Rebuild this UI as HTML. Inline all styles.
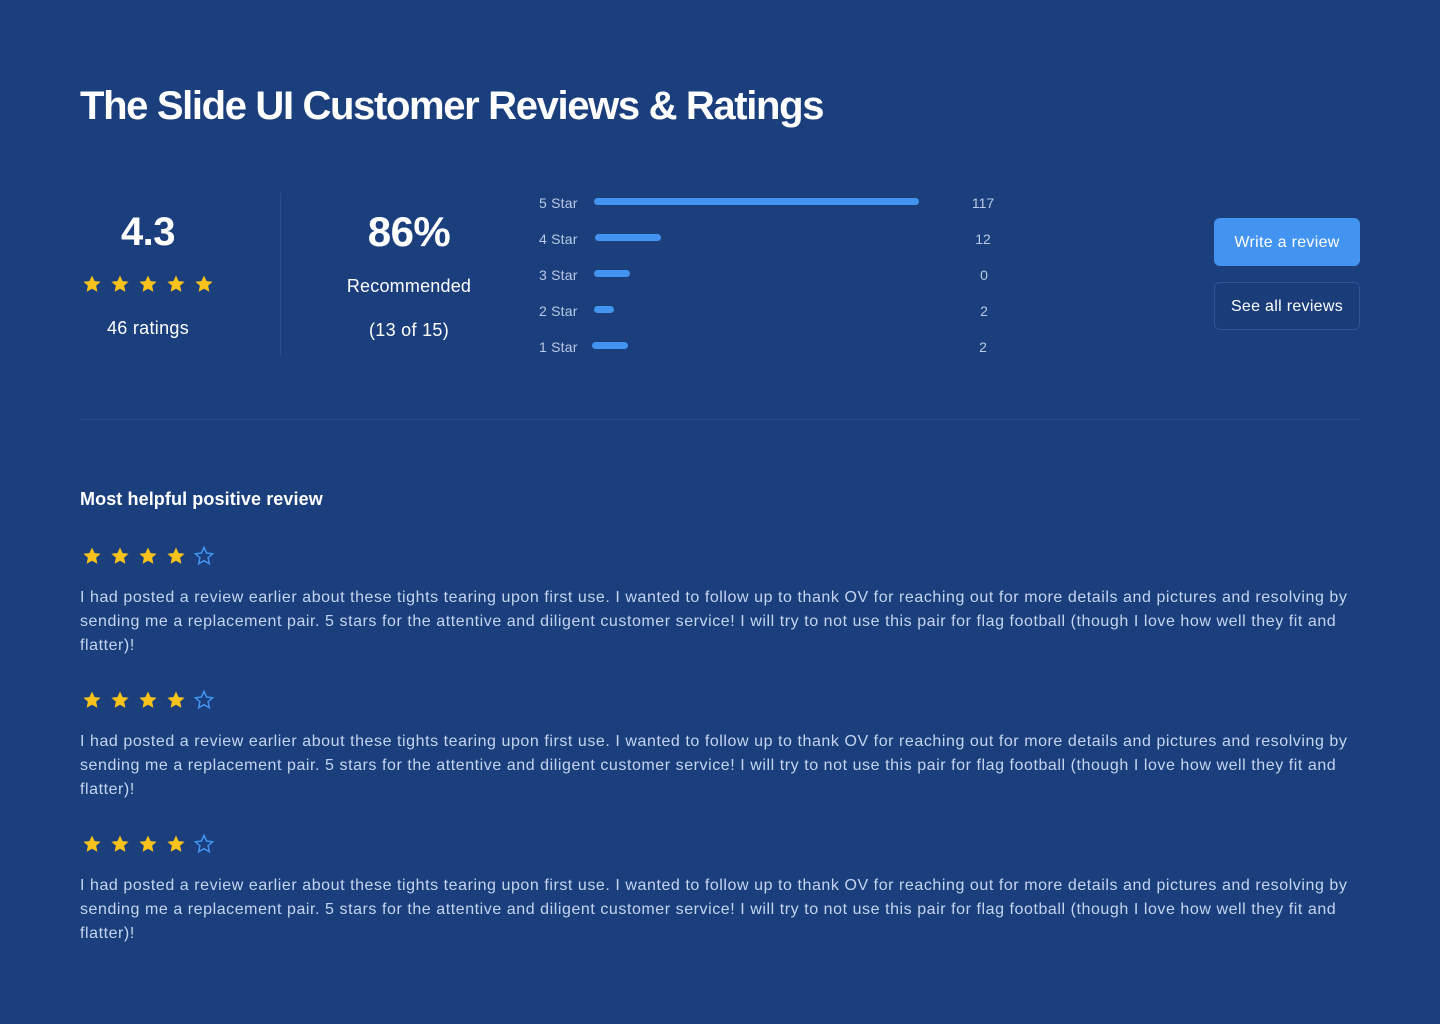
<!DOCTYPE html>
<html><head><meta charset="utf-8"><style>
*{margin:0;padding:0;box-sizing:border-box}
body{width:1440px;height:1024px;background:#1b3f7c;font-family:"Liberation Sans",sans-serif;color:#fff;position:relative;overflow:hidden}
.a{position:absolute}
h1{position:absolute;left:80px;top:84px;font-size:40px;font-weight:700;letter-spacing:-1.35px;white-space:nowrap}
.c{text-align:center}
.stars svg{margin-right:8px;vertical-align:top}
.lbl{font-size:14px;color:#b9c9e6;width:60px;letter-spacing:0.2px}
.bar{height:7px;border-radius:4px;background:#4394f0}
.num{font-size:14px;color:#b9c9e6;width:40px;text-align:center}
.btn{position:absolute;left:1214px;width:146px;height:48px;border-radius:6px;font-size:16px;display:flex;align-items:center;justify-content:center;letter-spacing:0.3px;padding-top:2px}
.rev{position:absolute;left:80px;font-size:16px;line-height:24px;color:#c5d4ef;white-space:nowrap;letter-spacing:0.56px}
</style></head><body>
<svg width="0" height="0" style="position:absolute"><defs>
<path id="s" d="M10 1.5l2.6 5.6 6 .6-4.5 4.1 1.3 6-5.4-3.1-5.4 3.1 1.3-6L1.4 7.7l6-.6z"/>
</defs></svg>
<h1>The Slide UI Customer Reviews &amp; Ratings</h1>

<div class="a c" style="left:80px;top:210px;width:136px;font-size:40px;font-weight:700;letter-spacing:-0.5px">4.3</div>
<div class="a stars" style="left:82px;top:274px;white-space:nowrap">
<svg width="20" height="20"><use href="#s" fill="#f8c21c"/></svg><svg width="20" height="20"><use href="#s" fill="#f8c21c"/></svg><svg width="20" height="20"><use href="#s" fill="#f8c21c"/></svg><svg width="20" height="20"><use href="#s" fill="#f8c21c"/></svg><svg width="20" height="20"><use href="#s" fill="#f8c21c"/></svg></div>
<div class="a c" style="left:80px;top:318px;width:136px;font-size:18px;letter-spacing:0.3px">46 ratings</div>
<div class="a" style="left:280px;top:193px;width:1px;height:163px;background:#2a4f8c"></div>

<div class="a c" style="left:320px;top:208px;width:178px;font-size:42px;font-weight:700;letter-spacing:-0.5px">86%</div>
<div class="a c" style="left:320px;top:276px;width:178px;font-size:18px;letter-spacing:0.2px">Recommended</div>
<div class="a c" style="left:320px;top:320px;width:178px;font-size:18px;letter-spacing:0.3px">(13 of 15)</div>

<div class="a lbl" style="left:539px;top:195px">5 Star</div><div class="a bar" style="left:594px;top:198px;width:325px"></div><div class="a num" style="left:963px;top:195px">117</div>
<div class="a lbl" style="left:539px;top:231px">4 Star</div><div class="a bar" style="left:595px;top:234px;width:66px"></div><div class="a num" style="left:963px;top:231px">12</div>
<div class="a lbl" style="left:539px;top:267px">3 Star</div><div class="a bar" style="left:594px;top:270px;width:36px"></div><div class="a num" style="left:964px;top:267px">0</div>
<div class="a lbl" style="left:539px;top:303px">2 Star</div><div class="a bar" style="left:594px;top:306px;width:20px"></div><div class="a num" style="left:964px;top:303px">2</div>
<div class="a lbl" style="left:539px;top:339px">1 Star</div><div class="a bar" style="left:592px;top:342px;width:36px"></div><div class="a num" style="left:963px;top:339px">2</div>

<div class="btn" style="top:218px;background:#4394f0">Write a review</div>
<div class="btn" style="top:282px;border:1px solid #2d5597;background:#1a3d79">See all reviews</div>

<div class="a" style="left:80px;top:419px;width:1280px;height:1px;background:#2a4f8c"></div>
<div class="a" style="left:80px;top:489px;font-size:18px;font-weight:700;letter-spacing:0.1px">Most helpful positive review</div>

<div class="a stars" style="left:82px;top:546px;white-space:nowrap"><svg width="20" height="20"><use href="#s" fill="#f8c21c"/></svg><svg width="20" height="20"><use href="#s" fill="#f8c21c"/></svg><svg width="20" height="20"><use href="#s" fill="#f8c21c"/></svg><svg width="20" height="20"><use href="#s" fill="#f8c21c"/></svg><svg width="20" height="20"><use href="#s" fill="none" stroke="#4394f0" stroke-width="1.5"/></svg></div>
<div class="rev" style="top:586px">I had posted a review earlier about these tights tearing upon first use. I wanted to follow up to thank OV for reaching out for more details and pictures and resolving by<br>sending me a replacement pair. 5 stars for the attentive and diligent customer service! I will try to not use this pair for flag football (though I love how well they fit and<br>flatter)!</div>

<div class="a stars" style="left:82px;top:690px;white-space:nowrap"><svg width="20" height="20"><use href="#s" fill="#f8c21c"/></svg><svg width="20" height="20"><use href="#s" fill="#f8c21c"/></svg><svg width="20" height="20"><use href="#s" fill="#f8c21c"/></svg><svg width="20" height="20"><use href="#s" fill="#f8c21c"/></svg><svg width="20" height="20"><use href="#s" fill="none" stroke="#4394f0" stroke-width="1.5"/></svg></div>
<div class="rev" style="top:730px">I had posted a review earlier about these tights tearing upon first use. I wanted to follow up to thank OV for reaching out for more details and pictures and resolving by<br>sending me a replacement pair. 5 stars for the attentive and diligent customer service! I will try to not use this pair for flag football (though I love how well they fit and<br>flatter)!</div>

<div class="a stars" style="left:82px;top:834px;white-space:nowrap"><svg width="20" height="20"><use href="#s" fill="#f8c21c"/></svg><svg width="20" height="20"><use href="#s" fill="#f8c21c"/></svg><svg width="20" height="20"><use href="#s" fill="#f8c21c"/></svg><svg width="20" height="20"><use href="#s" fill="#f8c21c"/></svg><svg width="20" height="20"><use href="#s" fill="none" stroke="#4394f0" stroke-width="1.5"/></svg></div>
<div class="rev" style="top:874px">I had posted a review earlier about these tights tearing upon first use. I wanted to follow up to thank OV for reaching out for more details and pictures and resolving by<br>sending me a replacement pair. 5 stars for the attentive and diligent customer service! I will try to not use this pair for flag football (though I love how well they fit and<br>flatter)!</div>
</body></html>
